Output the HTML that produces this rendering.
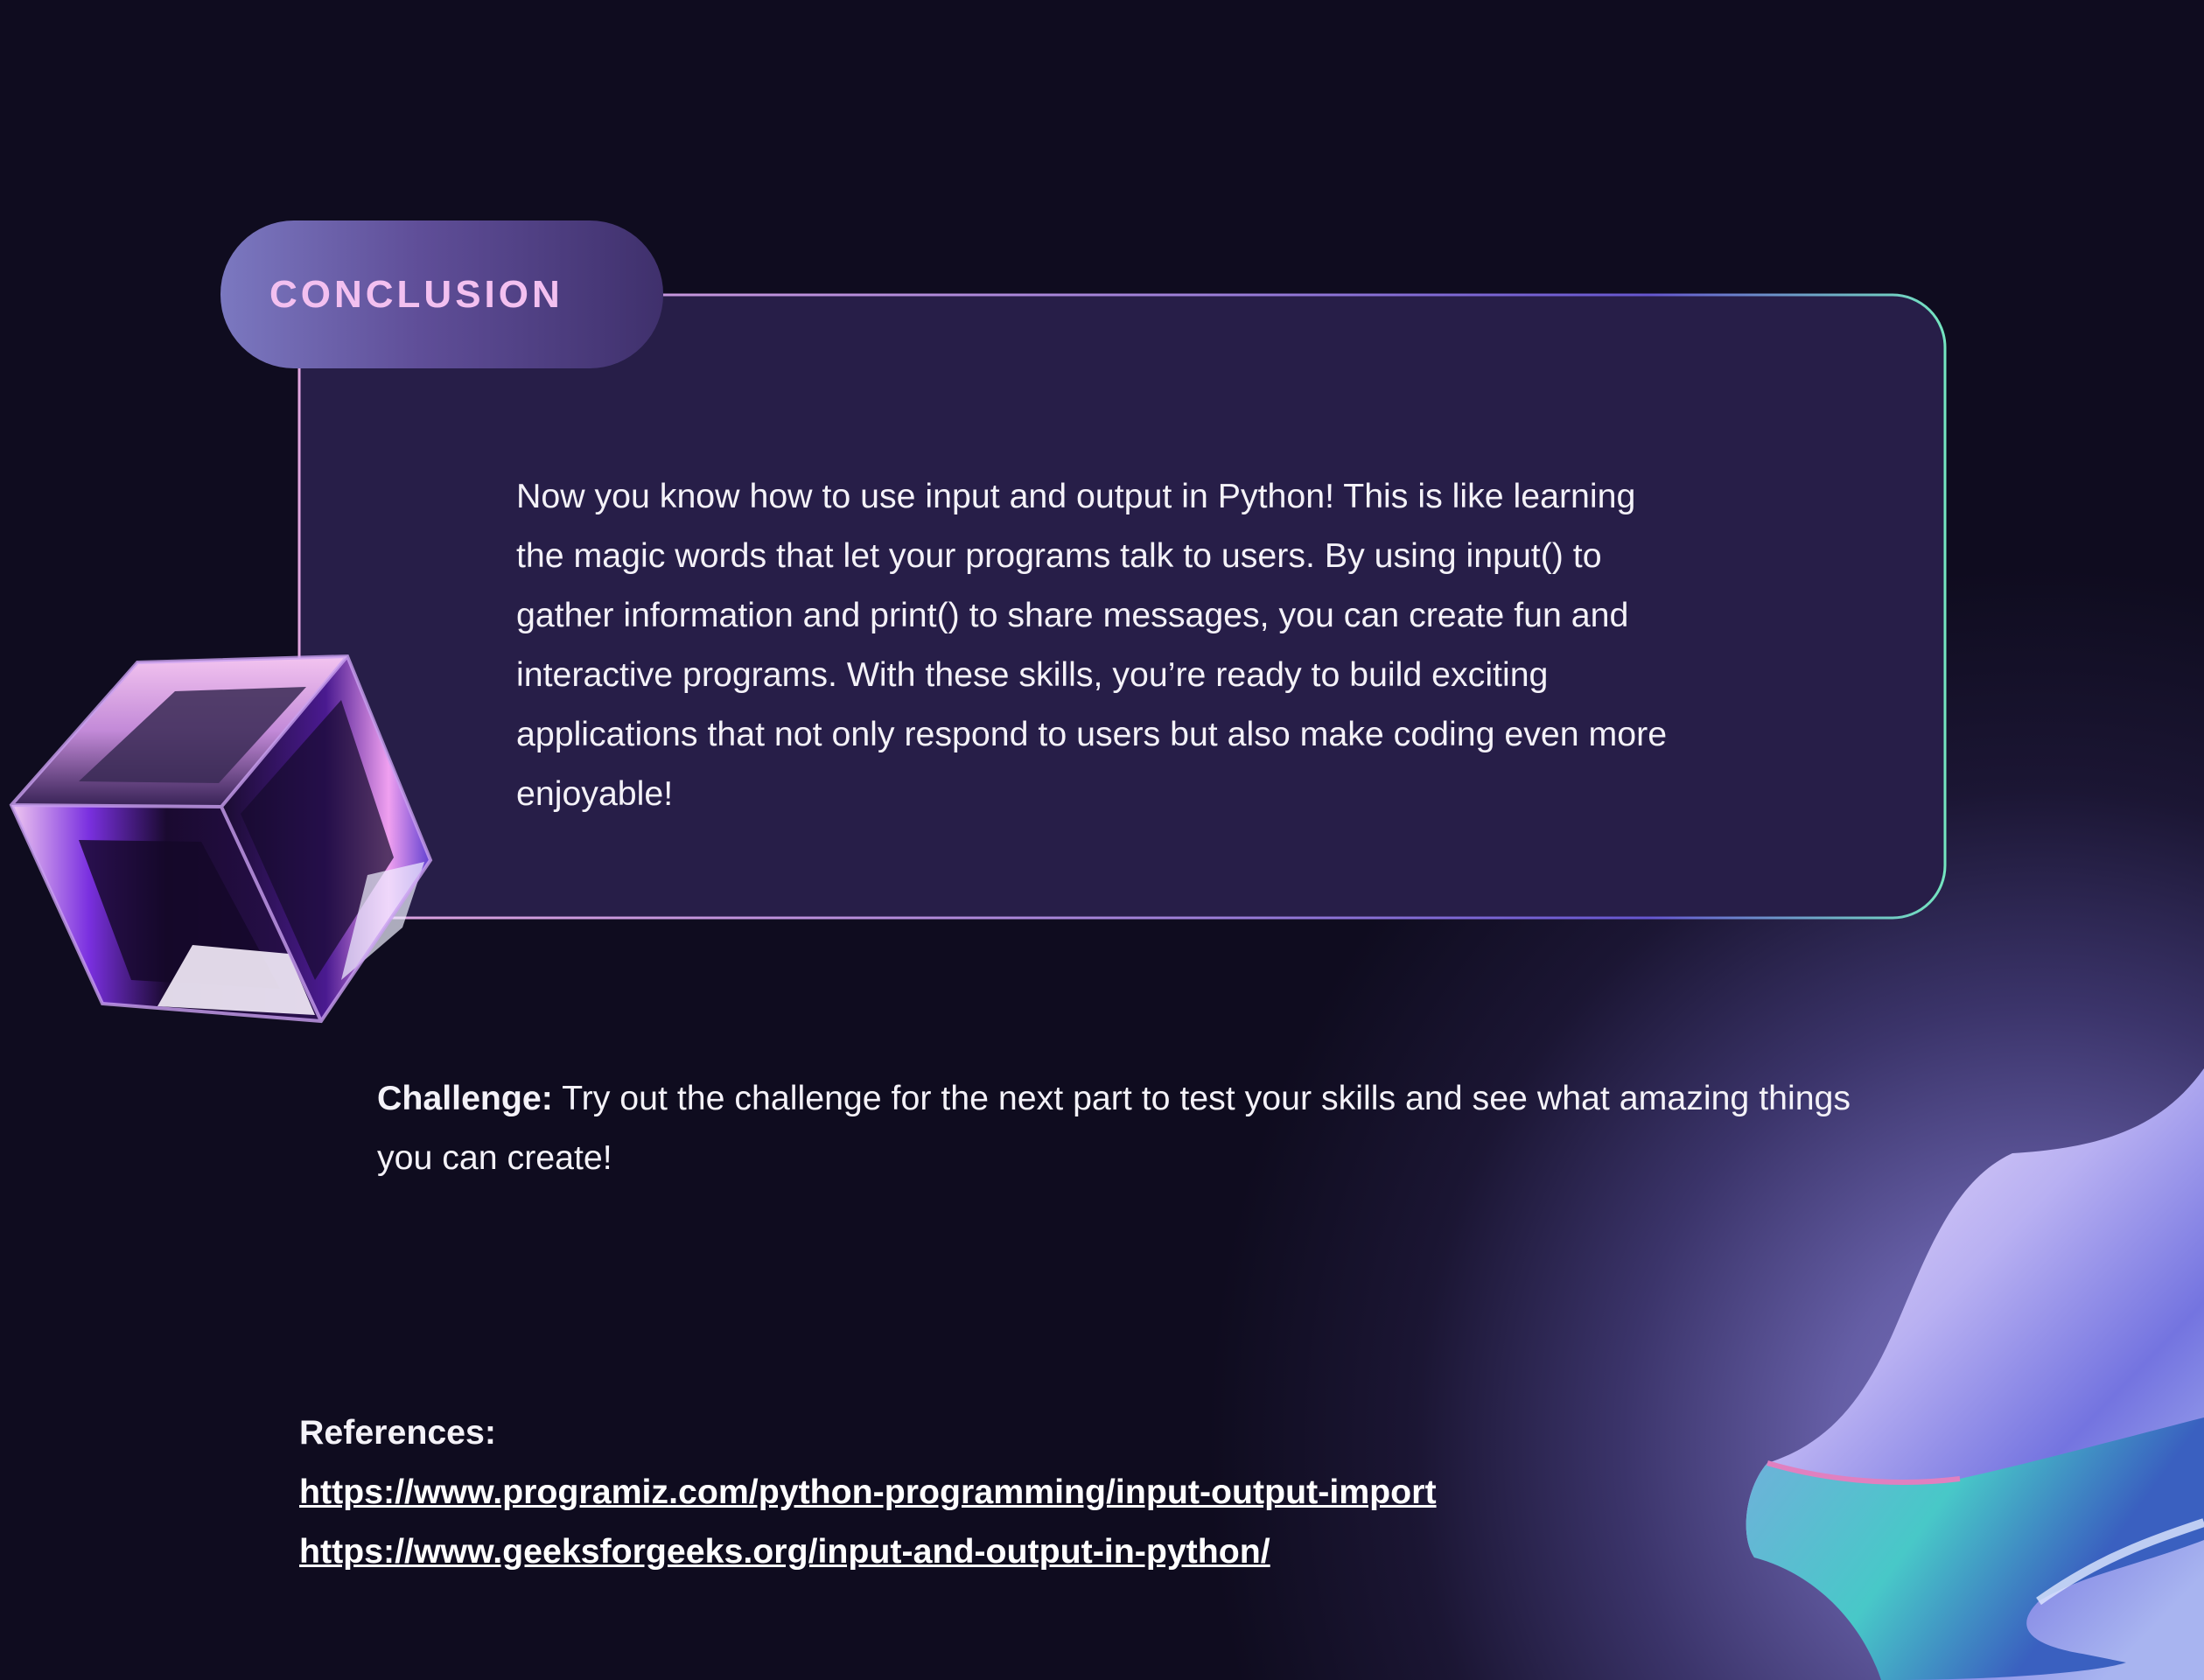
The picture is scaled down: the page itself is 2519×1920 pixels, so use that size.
<!DOCTYPE html>
<html><head><meta charset="utf-8"><style>
html,body{margin:0;padding:0;width:2519px;height:1920px;overflow:hidden}
body{position:relative;font-family:"Liberation Sans",Arial,sans-serif;color:#fff;
background:radial-gradient(ellipse 950px 1000px at 2330px 1650px,rgba(125,118,195,1) 0%,rgba(105,98,172,0.95) 25%,rgba(70,62,125,0.8) 50%,rgba(35,28,65,0.6) 75%,rgba(15,12,31,0) 100%),#0f0c1f}
.box{position:absolute;left:342px;top:337px;width:1881px;height:712px;border-radius:60px;background:#271e48}
.pill{position:absolute;left:252px;top:252px;width:506px;height:169px;border-radius:84px;background:linear-gradient(90deg,#7b78c0 0%,#5f4e98 45%,#3f306c 100%)}
.pill span{position:absolute;left:56px;top:60px;font-size:44px;font-weight:bold;letter-spacing:4px;color:#f3c0f0}
.t{position:absolute;font-size:39.3px;line-height:68px;color:#f4f2f8}
a{color:#fff;text-decoration:underline;font-weight:bold}
</style></head><body>
<div class="box"></div>
<svg style="position:absolute;left:0;top:0" width="2519" height="1920">
<defs>
<linearGradient id="bd" x1="342" y1="0" x2="2223" y2="0" gradientUnits="userSpaceOnUse">
<stop offset="0" stop-color="#e2a6e0"/><stop offset="0.55" stop-color="#9d7fd8"/><stop offset="0.82" stop-color="#6656d0"/><stop offset="1" stop-color="#74e6c0"/></linearGradient>
<linearGradient id="top" x1="0" y1="750" x2="0" y2="920" gradientUnits="userSpaceOnUse"><stop offset="0" stop-color="#f3c4f0"/><stop offset="0.5" stop-color="#c38ad8"/><stop offset="1" stop-color="#3a2458"/></linearGradient>
<linearGradient id="fr" x1="13" y1="0" x2="367" y2="0" gradientUnits="userSpaceOnUse"><stop offset="0" stop-color="#f0c8f0"/><stop offset="0.25" stop-color="#7a30e0"/><stop offset="0.5" stop-color="#1a0a30"/><stop offset="1" stop-color="#2a1050"/></linearGradient>
<linearGradient id="rt" x1="253" y1="0" x2="492" y2="0" gradientUnits="userSpaceOnUse"><stop offset="0" stop-color="#1a0c30"/><stop offset="0.5" stop-color="#4a1a90"/><stop offset="0.8" stop-color="#f0a0f0"/><stop offset="1" stop-color="#6040d0"/></linearGradient>
<linearGradient id="wv" x1="2000" y1="1300" x2="2519" y2="1800" gradientUnits="userSpaceOnUse"><stop offset="0" stop-color="#f0e0fa"/><stop offset="0.4" stop-color="#b8b0f2"/><stop offset="0.7" stop-color="#7474e0"/><stop offset="1" stop-color="#a8b4f0"/></linearGradient>
<linearGradient id="tl" x1="2000" y1="1700" x2="2300" y2="1920" gradientUnits="userSpaceOnUse"><stop offset="0" stop-color="#6ab4d8"/><stop offset="0.5" stop-color="#48c8c8"/><stop offset="1" stop-color="#3a60c0"/></linearGradient>
</defs>
<path d="M758 337 H2163 A60 60 0 0 1 2223 397 V989 A60 60 0 0 1 2163 1049 H402 A60 60 0 0 1 342 989 V421" fill="none" stroke="url(#bd)" stroke-width="3"/>
<path d="M2519 1221 C2470 1290 2400 1312 2300 1318 C2230 1350 2200 1440 2165 1520 C2130 1600 2090 1650 2020 1672 C1995 1700 1988 1755 2005 1780 C2060 1790 2110 1820 2135 1870 L2150 1920 L2519 1920 Z" fill="url(#wv)"/>
<path d="M2020 1672 C2080 1690 2160 1700 2240 1690 C2330 1670 2440 1640 2519 1620 L2519 1760 C2440 1790 2380 1800 2330 1830 C2300 1860 2320 1880 2380 1890 L2430 1900 C2400 1910 2300 1920 2150 1920 C2130 1860 2080 1800 2005 1780 C1988 1755 1995 1700 2020 1672 Z" fill="url(#tl)"/>
<path d="M2020 1672 C2080 1690 2160 1700 2240 1690" fill="none" stroke="#e080c0" stroke-width="6"/>
<path d="M2330 1830 C2400 1780 2460 1760 2519 1740" fill="none" stroke="#e0e8ff" stroke-width="10" opacity="0.8"/>
<polygon points="157,757 397,750 253,922 13,920" fill="url(#top)"/>
<polygon points="200,790 350,785 250,895 90,893" fill="#3a2a55" opacity="0.85"/>
<polygon points="13,920 253,922 367,1167 117,1147" fill="url(#fr)"/>
<polygon points="253,922 397,750 492,983 367,1167" fill="url(#rt)"/>
<polygon points="90,960 230,962 320,1130 150,1120" fill="#140828" opacity="0.8"/>
<polygon points="275,930 390,800 450,980 360,1120" fill="#160a2c" opacity="0.7"/>
<polygon points="220,1080 330,1090 360,1160 180,1150" fill="#f6eefc" opacity="0.9"/>
<polygon points="420,1000 485,985 460,1060 390,1120" fill="#f0f0ff" opacity="0.7"/>
<path d="M157 757 L397 750 L492 983 L367 1167 L117 1147 L13 920 Z M13 920 L253 922 L397 750 M253 922 L367 1167" fill="none" stroke="#c9a0f0" stroke-width="4" opacity="0.8"/>
</svg>
<div class="pill"><span>CONCLUSION</span></div>
<div class="t" style="left:590px;top:533px;width:1500px">Now you know how to use input and output in Python! This is like learning<br>the magic words that let your programs talk to users. By using input() to<br>gather information and print() to share messages, you can create fun and<br>interactive programs. With these skills, you’re ready to build exciting<br>applications that not only respond to users but also make coding even more<br>enjoyable!</div>
<div class="t" style="left:431px;top:1221px;width:1900px"><b>Challenge:</b> Try out the challenge for the next part to test your skills and see what amazing things<br>you can create!</div>
<div class="t" style="left:342px;top:1603px;font-weight:bold">References:<br><a>https://www.programiz.com/python-programming/input-output-import</a><br><a>https://www.geeksforgeeks.org/input-and-output-in-python/</a></div>
</body></html>
